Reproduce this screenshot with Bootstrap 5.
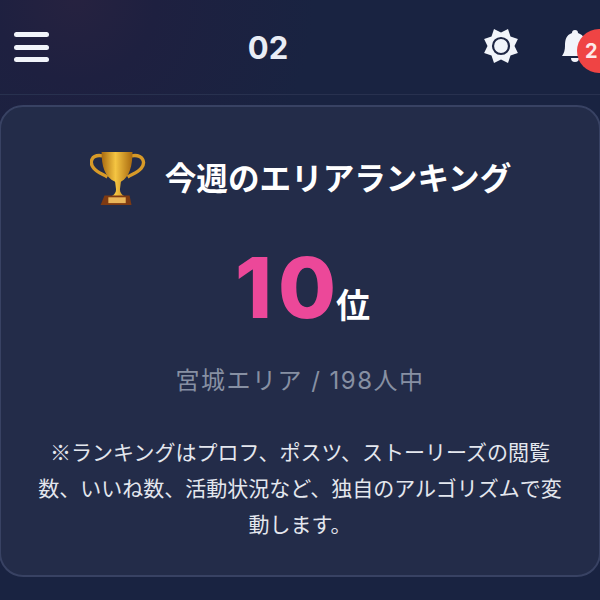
<!DOCTYPE html>
<html lang="ja"><head><meta charset="utf-8">
<link href="https://cdn.jsdelivr.net/npm/bootstrap@5.3.0/dist/css/bootstrap.min.css" rel="stylesheet">
<style>
html,body{height:600px;overflow:hidden}
body{background:radial-gradient(circle at 75px 0,#262240 0,#1e2040 80px,#192341 240px,#192341 100%);font-family:"Inter","Noto Sans CJK JP",sans-serif;color:#fff}
.topbar{height:95px;border-bottom:1px solid #28314f;padding:0 0 0 14px}
.bars{width:35px;height:30px;gap:7.5px}
.bars i{display:block;height:5px;border-radius:3px;background:#f1f4fa}
.pagenum{left:208px;width:120px;top:30px;text-align:center;font-size:31px;font-weight:700;line-height:36px;color:#e9edf5}
.gear{left:482px;top:27px}
.bell{left:560px;top:27px}
.redbadge{left:577px;top:29px;width:44px;height:44px;border-radius:50%;background:#ef4444;font-size:20px;font-weight:700;line-height:44px;padding-left:8px;color:#fde8e8}
.panel{margin:10px -1px 0 -1px;height:472px;background:#232c49;border:2px solid #384263;border-radius:24px;text-align:center}
.paneltitle{padding-top:38px;height:106px;gap:19px;font-size:31.6px;font-weight:700;line-height:68px;padding-left:1px}
.rankline{margin-top:28px;height:94px;line-height:94px;padding-left:5px}
.ranknum{font-size:84px;font-weight:800;color:#ec4899}
.rankone{margin-right:6px}
.rankunit{font-size:34px;font-weight:700}
.area{margin-top:28px;font-size:24px;line-height:36px;color:#8790a3;letter-spacing:1.5px}
.note{margin:34px auto 0;width:530px;font-family:"Noto Sans CJK JP",sans-serif;font-size:21px;line-height:36px;color:#e4e7ee}
</style></head><body>
<header class="topbar position-relative d-flex align-items-center">
<div class="bars d-flex flex-column"><i></i><i></i><i></i></div>
<div class="pagenum position-absolute">02</div>
<svg class="gear position-absolute" width="38" height="38" viewBox="0 0 38 38"><polygon fill="#f1f4fa" points="19,5.5 26,2.1 28.5,9.5 35.9,12 32.5,19 35.9,26 28.5,28.5 26,35.9 19,32.5 12,35.9 9.5,28.5 2.1,26 5.5,19 2.1,12 9.5,9.5 12,2.1"/><circle cx="19" cy="19" r="8" fill="none" stroke="#1f2745" stroke-width="2.2"/></svg>
<svg class="bell position-absolute" width="30" height="38" viewBox="0 0 30 38"><path fill="#f1f4fa" d="M12 6a3 3 0 0 1 6 0c6 2 8 7 8 13 0 4 2 7 4 10H2c2-3 3-6 3-10 0-6 1-11 7-13zM11 31h8a4 4 0 0 1-8 0z"/></svg>
<div class="redbadge position-absolute">2</div>
</header>
<main class="panel">
<div class="paneltitle d-flex justify-content-center align-items-start">
<svg width="56" height="58" viewBox="0 0 58 58" class="mt-1"><defs><linearGradient id="g" x1="0" x2="1"><stop offset="0" stop-color="#a86a10"/><stop offset=".45" stop-color="#f5c542"/><stop offset="1" stop-color="#a8690f"/></linearGradient></defs><path fill="none" stroke="#d79a28" stroke-width="3.5" d="M13 6C1 4-1 13 4 19c3 4 9 6 14 9M43 6c12-2 15 7 10 13-3 4-9 6-14 9"/><path fill="url(#g)" d="M12 2h32c0 14-3 26-12 31l-1 8c0 3 2 6 5 7H22c3-1 5-4 5-7l-1-8C15 28 12 16 12 2z"/><path fill="#7e3a12" d="M15 47h26l2 10H11z"/><rect x="19" y="49" width="18" height="6" fill="#e9b65a"/></svg>
<span>今週のエリアランキング</span></div>
<div class="rankline"><span class="ranknum"><span class="rankone">1</span>0</span><span class="rankunit">位</span></div>
<div class="area">宮城エリア / 198人中</div>
<p class="note">※ランキングはプロフ、ポスツ、ストーリーズの閲覧数、いいね数、活動状況など、独自のアルゴリズムで変動します。</p>
</main>
</body></html>
